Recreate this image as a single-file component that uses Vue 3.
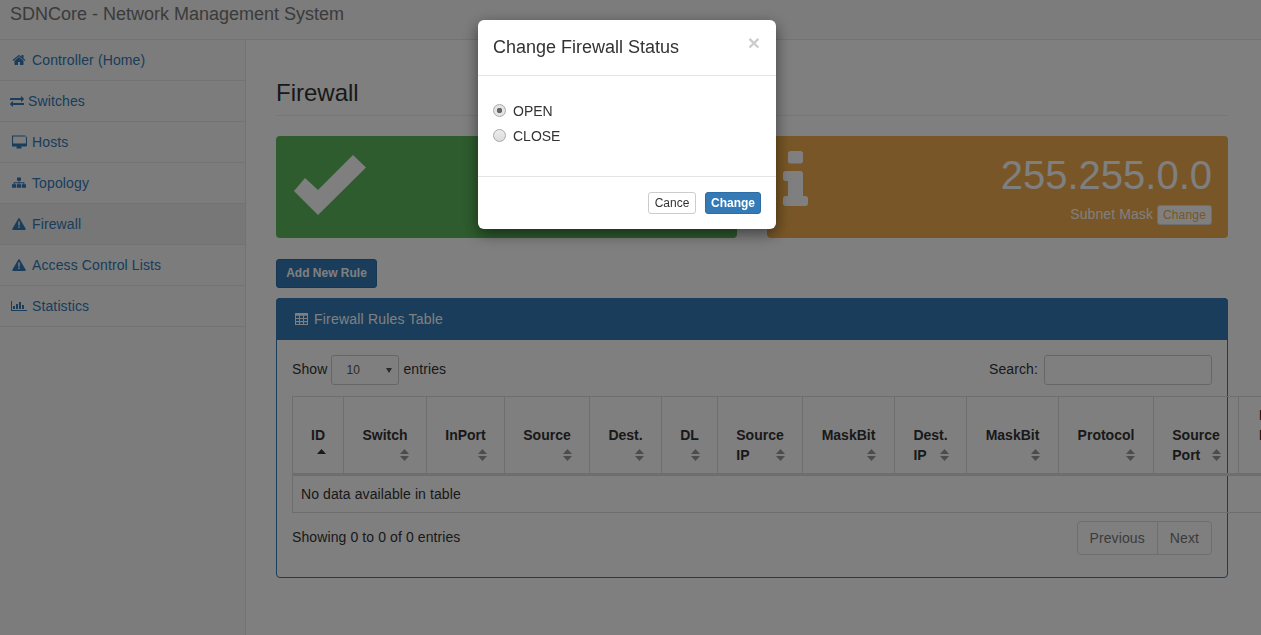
<script setup>
import { ref } from "vue";

const status = ref("OPEN");

const menu = [
  { label: "Controller (Home)", icon: "home" },
  { label: "Switches", icon: "exchange" },
  { label: "Hosts", icon: "desktop" },
  { label: "Topology", icon: "sitemap" },
  { label: "Firewall", icon: "warning", active: true },
  { label: "Access Control Lists", icon: "warning" },
  { label: "Statistics", icon: "chart" },
];

const icons = {
  home: { box: "0 0 1792 1792", d: "M1472 992v480q0 26-19 45t-45 19h-384v-384h-256v384h-384q-26 0-45-19t-19-45v-480q0-1 .5-3t.5-3l575-474 575 474q1 2 1 6zm223-69l-62 74q-8 9-21 11h-3q-13 0-21-7l-692-577-692 577q-12 8-24 7-13-2-21-11l-62-74q-8-10-7-23.500t11-21.500l719-599q32-26 76-26t76 26l244 204v-195q0-14 9-23t23-9h192q14 0 23 9t9 23v408l219 182q10 8 11 21.500t-7 23.500z" },
  exchange: { box: "0 0 1792 1792", d: "M1792 1184v192q0 13-9.500 22.500t-22.500 9.500h-1376v192q0 13-9.500 22.500t-22.500 9.500q-12 0-24-10l-319-320q-9-9-9-22 0-14 9-23l320-320q9-9 23-9 13 0 22.500 9.500t9.500 22.500v192h1376q13 0 22.500 9.500t9.500 22.500zm0-544q0 14-9 23l-320 320q-9 9-23 9-13 0-22.500-9.500t-9.500-22.500v-192h-1376q-13 0-22.500-9.500t-9.500-22.500v-192q0-13 9.500-22.500t22.500-9.500h1376v-192q0-14 9-23t23-9q12 0 24 10l319 319q9 9 9 23z" },
  desktop: { box: "0 0 1792 1792", d: "M1664 1056v-832q0-13-9.500-22.500t-22.500-9.500h-1472q-13 0-22.500 9.500t-9.500 22.500v832q0 13 9.500 22.500t22.500 9.500h1472q13 0 22.500-9.500t9.500-22.500zm128-832v1088q0 66-47 113t-113 47h-544q0 37 16 77.500t32 71 16 43.500q0 26-19 45t-45 19h-512q-26 0-45-19t-19-45q0-14 16-44t32-70 16-78h-544q-66 0-113-47t-47-113v-1088q0-66 47-113t113-47h1472q66 0 113 47t47 113z" },
  sitemap: { box: "0 0 1792 1792", d: "M640 192h512v416H944v192h640v256h208v448h-544v-448h208v-128H944v128h208v448H640v-448h208v-128H336v128h208v448H0v-448h208V800h640V608H640z" },
  warning: { box: "0 0 1792 1792", d: "M896 128q48 0 80 50L1750 1500q30 60-5 110-30 50-90 50H137q-60 0-90-50-35-50-5-110L816 178q32-50 80-50zM790 560l20 560h172l20-560zM800 1220v180h192v-180z" },
  chart: { box: "0 0 2048 1792", d: "M0 256h128v1152h1920v128H0zM256 896h256v384H256zM640 640h256v640H640zM1024 384h256v896h-256zM1408 768h256v512h-256z" },
};

const columns = [
  { name: "ID", width: 51, sorted: true },
  { name: "Switch", width: 83 },
  { name: "InPort", width: 78 },
  { name: "Source", width: 85 },
  { name: "Dest.", width: 72 },
  { name: "DL", width: 56 },
  { name: "Source", second: "IP", width: 85 },
  { name: "MaskBit", width: 92 },
  { name: "Dest.", second: "IP", width: 72 },
  { name: "MaskBit", width: 92 },
  { name: "Protocol", width: 95 },
  { name: "Source", second: "Port", width: 85 },
  { name: "Dest.", second: "Port", stacked: true, width: 75 },
  { name: "Action", width: 85 },
];
const tableWidth = columns.reduce((sum, c) => sum + c.width, 0);
</script>

<template>
  <div class="page">
    <header class="navbar">SDNCore - Network Management System</header>

    <div class="wrap">
      <nav class="sidebar">
        <a
          v-for="item in menu"
          :key="item.label"
          class="menu-item"
          :class="[{ active: item.active }, 'is-' + item.icon]"
        >
          <svg class="menu-icon" :viewBox="icons[item.icon].box" preserveAspectRatio="none">
            <path :d="icons[item.icon].d" fill-rule="evenodd" />
          </svg>
          <span>{{ item.label }}</span>
        </a>
      </nav>

      <main class="content">
        <h1 class="title">Firewall</h1>

        <div class="cards">
          <div class="card green">
            <svg class="check" viewBox="0 0 73 60" preserveAspectRatio="none">
              <path d="M60 0 73 12.500 25 60 1 36 12 23 25 35z" />
            </svg>
          </div>
          <div class="card orange">
            <svg class="info" viewBox="0 128 640 1408" preserveAspectRatio="none">
              <path d="M640 1344v128q0 26-19 45t-45 19h-512q-26 0-45-19t-19-45v-128q0-26 19-45t45-19h64v-384h-64q-26 0-45-19t-19-45v-128q0-26 19-45t45-19h384q26 0 45 19t19 45v576h64q26 0 45 19t19 45zm-128-1152v192q0 26-19 45t-45 19h-256q-26 0-45-19t-19-45v-192q0-26 19-45t45-19h256q26 0 45 19t19 45z" />
            </svg>
            <div class="card-text">
              <div class="big">255.255.0.0</div>
              <div class="small"><span class="small-label">Subnet Mask</span><button class="mini">Change</button></div>
            </div>
          </div>
        </div>

        <button class="add-btn">Add New Rule</button>

        <section class="panel">
          <div class="panel-heading">
            <svg class="table-icon" viewBox="0 160 1664 1472" preserveAspectRatio="none">
              <path fill-rule="evenodd" d="M64 160h1536q64 0 64 64v1344q0 64-64 64H64q-64 0-64-64V224q0-64 64-64zM128 512v256h384V512zM640 512v256h384V512zM1152 512v256h384V512zM128 896v256h384V896zM640 896v256h384V896zM1152 896v256h384V896zM128 1280v224h384v-224zM640 1280v224h384v-224zM1152 1280v224h384v-224z" />
            </svg>
            Firewall Rules Table
          </div>
          <div class="panel-body">
            <div class="controls">
              <label class="length">
                Show
                <span class="select"><span>10</span><i class="caret"></i></span>
                entries
              </label>
              <label class="search">Search: <input type="text" /></label>
            </div>

            <table class="rules" :style="{ width: tableWidth + 'px' }">
              <colgroup>
                <col v-for="(c, i) in columns" :key="i" :style="{ width: c.width + 'px' }" />
              </colgroup>
              <thead>
                <tr>
                  <th v-for="(c, i) in columns" :key="i">
                    <div class="th-in">
                      <div>{{ c.name }}</div>
                      <div v-if="c.stacked">{{ c.second }}</div>
                      <div class="th-line">
                        <span v-if="c.second && !c.stacked">{{ c.second }}</span>
                        <svg class="sort" viewBox="0 0 9 12">
                          <path v-if="c.sorted" class="sort-on" d="M4.500 0 9 5H0z" />
                          <template v-else>
                            <path d="M4.500 0 9 5H0z" />
                            <path d="M0 7h9l-4.500 5z" />
                          </template>
                        </svg>
                      </div>
                    </div>
                  </th>
                </tr>
              </thead>
              <tbody>
                <tr>
                  <td :colspan="columns.length">No data available in table</td>
                </tr>
              </tbody>
            </table>

            <div class="table-foot">
              <div class="showing">Showing 0 to 0 of 0 entries</div>
              <div class="pager">
                <a class="prev">Previous</a>
                <a class="next">Next</a>
              </div>
            </div>
          </div>
        </section>
      </main>
    </div>

    <div class="backdrop"></div>

    <div class="modal">
      <div class="modal-header">
        <h4>Change Firewall Status</h4>
        <span class="close">×</span>
      </div>
      <div class="modal-body">
        <label class="radio-row">
          <input v-model="status" type="radio" value="OPEN" name="fw" />
          OPEN
        </label>
        <label class="radio-row">
          <input v-model="status" type="radio" value="CLOSE" name="fw" />
          CLOSE
        </label>
      </div>
      <div class="modal-footer">
        <button class="btn-cancel">Cance</button>
        <button class="btn-change">Change</button>
      </div>
    </div>
  </div>
</template>

<style>
html,
body {
  margin: 0;
  overflow: hidden;
}
</style>

<style scoped>
.page {
  height: 100vh;
  display: flex;
  flex-direction: column;
  overflow: hidden;
  font-family: "Liberation Sans", Arial, sans-serif;
  font-size: 14px;
  line-height: 20px;
  color: #333;
  background: #fff;
}
.navbar {
  box-sizing: border-box;
  height: 40px;
  flex: none;
  padding: 4px 10px 0;
  font-size: 18px;
  color: #777;
  background: #f8f8f8;
  border-bottom: 1px solid #e7e7e7;
}
.wrap {
  flex: 1;
  display: flex;
  min-height: 0;
}
.sidebar {
  width: 245px;
  flex: none;
  background: #f8f8f8;
  border-right: 1px solid #e7e7e7;
  letter-spacing: 0.12px;
}
.menu-item {
  height: 40px;
  display: flex;
  align-items: center;
  padding-left: 12px;
  color: #337ab7;
  border-bottom: 1px solid #e7e7e7;
}
.menu-item.active {
  background: #eee;
}
.menu-icon {
  width: 14px;
  height: 14px;
  margin-right: 6px;
  fill: #337ab7;
  flex: none;
}
.is-exchange {
  padding-left: 10px;
}
.is-exchange .menu-icon {
  margin-right: 4px;
}
.is-desktop .menu-icon {
  width: 15px;
  margin-right: 5px;
}
.is-chart {
  padding-left: 11px;
}
.is-chart .menu-icon {
  width: 16px;
  margin-right: 5px;
}
.content {
  flex: 1;
  min-width: 0;
  padding: 40px 33px 0 30px;
}
.title {
  margin: 0 0 20px;
  padding-bottom: 9px;
  font-size: 24px;
  line-height: 26px;
  font-weight: 400;
  border-bottom: 1px solid #eee;
}
.cards {
  display: grid;
  grid-template-columns: 1fr 1fr;
  gap: 30px;
  margin-bottom: 21px;
}
.card {
  box-sizing: border-box;
  height: 102px;
  display: flex;
  justify-content: space-between;
  padding: 15px 16px 13px 16px;
  border-radius: 4px;
  color: #fff;
}
.green {
  background: #5cb85c;
}
.orange {
  background: #f0ad4e;
}
.check {
  width: 73px;
  height: 60px;
  margin: 4px 0 0 1px;
  fill: #fff;
}
.info {
  width: 25px;
  height: 55px;
  margin: 0;
  fill: #fff;
}
.card-text {
  text-align: right;
}
.big {
  font-size: 40px;
  line-height: 48px;
}
.small {
  display: flex;
  justify-content: flex-end;
  gap: 4px;
  margin-top: 6px;
  height: 20px;
}
.small-label {
  letter-spacing: 0.1px;
  line-height: 19px;
}
.mini {
  box-sizing: border-box;
  width: 55px;
  height: 20px;
  padding: 0;
  font: 12px "Liberation Sans", Arial, sans-serif;
  letter-spacing: 0.2px;
  color: #f0ad4e;
  background: #fff;
  border: 1px solid #ddd;
  border-radius: 3px;
}
.add-btn {
  display: block;
  box-sizing: border-box;
  width: 101px;
  height: 29px;
  padding: 0 0 2px;
  margin-bottom: 10px;
  font: bold 12px "Liberation Sans", Arial, sans-serif;
  color: #fff;
  background: #337ab7;
  border: 1px solid #2e6da4;
  border-radius: 3px;
}
.panel {
  box-sizing: border-box;
  height: 280px;
  border: 1px solid #337ab7;
  border-radius: 4px;
}
.panel-heading {
  box-sizing: border-box;
  height: 42px;
  margin: -1px -1px 0;
  display: flex;
  align-items: center;
  gap: 6px;
  padding-left: 19px;
  letter-spacing: 0.2px;
  color: #fff;
  background: #337ab7;
  border-radius: 4px 4px 0 0;
}
.table-icon {
  width: 13px;
  height: 12px;
  fill: #fff;
}
.panel-body {
  padding: 15px;
  letter-spacing: 0.1px;
}
.controls {
  display: flex;
  justify-content: space-between;
  align-items: center;
  height: 30px;
  margin-bottom: 11px;
}
.select {
  box-sizing: border-box;
  display: inline-flex;
  align-items: center;
  justify-content: space-between;
  width: 68px;
  height: 30px;
  padding: 0 6px 0 14px;
  vertical-align: middle;
  font-size: 12px;
  color: #555;
  background: #fff;
  border: 1px solid #ccc;
  border-radius: 3px;
}
.caret {
  width: 0;
  height: 0;
  border-left: 3px solid transparent;
  border-right: 3px solid transparent;
  border-top: 5px solid #555;
}
.search input {
  box-sizing: border-box;
  width: 168px;
  height: 30px;
  margin-left: 2px;
  padding: 5px 10px;
  vertical-align: middle;
  background: #fff;
  border: 1px solid #ccc;
  border-radius: 3px;
}
.rules {
  table-layout: fixed;
  border-collapse: collapse;
  border-spacing: 0;
}
.rules th {
  padding: 8px 0;
  vertical-align: bottom;
  text-align: center;
  letter-spacing: 0;
  border: 1px solid #ddd;
  border-bottom-width: 3px;
}
.th-in {
  display: inline-block;
  vertical-align: bottom;
  text-align: left;
}
.th-line {
  display: flex;
  justify-content: space-between;
  align-items: center;
  height: 20px;
}
.sort {
  width: 9px;
  height: 12px;
  margin-left: auto;
  margin-right: -1px;
  fill: #999;
}
.sort .sort-on {
  fill: #333;
}
.rules td {
  padding: 8px;
  border: 1px solid #ddd;
}
.table-foot {
  display: flex;
  justify-content: space-between;
  margin-top: 8px;
}
.showing {
  padding-top: 6px;
}
.pager {
  display: flex;
  height: 34px;
  color: #777;
}
.pager a {
  box-sizing: border-box;
  padding: 6px 12px;
  background: #fff;
  border: 1px solid #ddd;
}
.prev {
  border-radius: 4px 0 0 4px;
}
.next {
  margin-left: -1px;
  border-radius: 0 4px 4px 0;
}
.backdrop {
  position: fixed;
  inset: 0;
  background: rgba(0, 0, 0, 0.5);
}
.modal {
  position: fixed;
  top: 20px;
  left: 478px;
  width: 298px;
  background: #fff;
  border-radius: 6px;
  box-shadow: 0 5px 15px rgba(0, 0, 0, 0.5);
}
.modal-header {
  box-sizing: border-box;
  height: 56px;
  padding: 15px;
  position: relative;
  border-bottom: 1px solid #e5e5e5;
}
.modal-header h4 {
  margin: 0;
  font-size: 18px;
  line-height: 24px;
  font-weight: 400;
}
.close {
  position: absolute;
  top: 12px;
  right: 16px;
  font-size: 21px;
  line-height: 21px;
  font-weight: 700;
  color: #000;
  opacity: 0.2;
}
.modal-body {
  box-sizing: border-box;
  height: 100px;
  padding: 22px 15px 0;
}
.radio-row {
  display: flex;
  align-items: center;
  gap: 7px;
  height: 25px;
}
.radio-row input {
  appearance: none;
  box-sizing: border-box;
  width: 13px;
  height: 13px;
  margin: 0;
  border: 1px solid #a9a9a9;
  border-radius: 50%;
  background: linear-gradient(#ececec, #dcdcdc);
}
.radio-row input:checked {
  background: radial-gradient(circle, #666 0 2.500px, #e4e4e4 3px);
}
.modal-footer {
  box-sizing: border-box;
  height: 53px;
  display: flex;
  justify-content: flex-end;
  align-items: flex-start;
  gap: 9px;
  padding: 15px 15px 0;
  border-top: 1px solid #e5e5e5;
}
.modal-footer button {
  box-sizing: border-box;
  height: 22px;
  padding: 0;
  font: 12px "Liberation Sans", Arial, sans-serif;
  border-radius: 3px;
}
.btn-cancel {
  width: 48px;
  color: #333;
  background: #fff;
  border: 1px solid #ccc;
}
.modal-footer .btn-change {
  width: 56px;
  font-weight: 700;
  color: #fff;
  background: #337ab7;
  border: 1px solid #2e6da4;
}
</style>
